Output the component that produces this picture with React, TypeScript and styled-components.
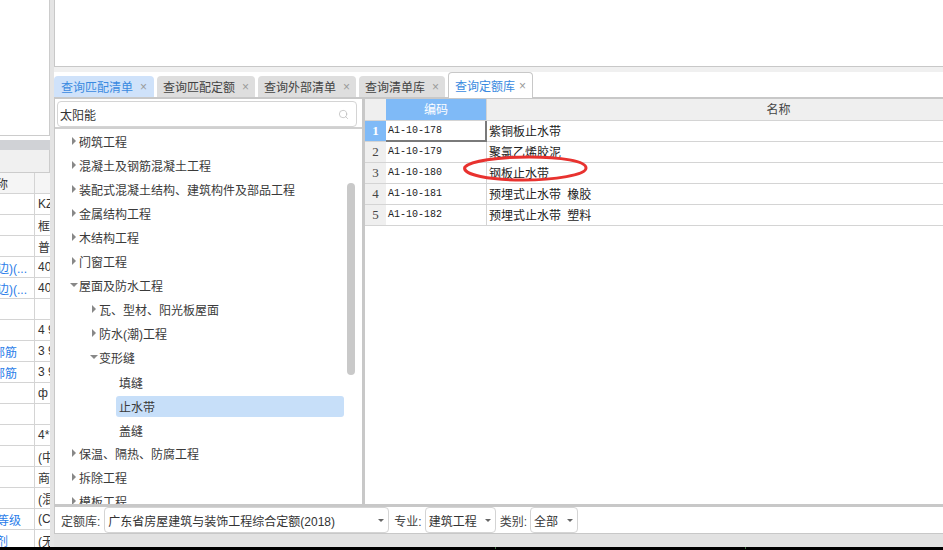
import React from "react";
import styled, { createGlobalStyle } from "styled-components";
import { Search } from "lucide-react";

const GlobalStyle = createGlobalStyle`
  html, body {
    margin: 0;
    padding: 0;
    height: 100%;
    overflow: hidden;
    background: #fff;
    font-family: "Liberation Sans", "Noto Sans CJK SC", sans-serif;
    font-size: 12px;
    color: #333;
  }
`;

const Page = styled.div`
  width: 943px;
  height: 550px;
  display: flex;
  flex-direction: column;
  overflow: hidden;
`;

const Body = styled.div`
  flex: 1;
  min-height: 0;
  display: flex;
`;

const Taskbar = styled.div`
  height: 3px;
  background: #000;
  position: relative;
`;

const TaskTick = styled.span<{ $x: number }>`
  position: absolute;
  left: ${(p) => p.$x}px;
  top: 0;
  width: 1px;
  height: 2px;
  background: #3c6b3c;
`;

/* left column, the table cut off by the splitter */
const LeftColumn = styled.div`
  width: 50px;
  flex: none;
  display: flex;
  flex-direction: column;
  overflow: hidden;
`;

const LeftBlank = styled.div`
  height: 135px;
  flex: none;
  border-right: 1px solid #ccc;
  border-bottom: 1px solid #ccc;
  box-sizing: content-box;
  width: 49px;
`;

const LeftGap = styled.div`
  height: 4px;
  flex: none;
`;

const LeftBar = styled.div`
  height: 10px;
  flex: none;
  background: #d0d2d6;
`;

const LeftToolbar = styled.div`
  height: 23px;
  flex: none;
  background: #f0f0f0;
  border-bottom: 1px solid #ccc;
  border-right: 1px solid #ccc;
  box-sizing: border-box;
`;

const Row = styled.div<{ $head?: boolean }>`
  height: 21px;
  flex: none;
  box-sizing: border-box;
  display: grid;
  grid-template-columns: 35px 15px;
  border-bottom: 1px solid #d4d4d4;
  background: ${(p) => (p.$head ? "#f5f5f5" : "#fff")};
`;

const NameCell = styled.div<{ $link?: boolean; $end?: number }>`
  display: flex;
  justify-content: flex-end;
  align-items: center;
  overflow: hidden;
  white-space: nowrap;
  padding-right: ${(p) => p.$end ?? 2}px;
  border-right: 1px solid #d4d4d4;
  color: ${(p) => (p.$link ? "#2b7de9" : "#333")};
`;

const ValueCell = styled.div`
  display: flex;
  align-items: center;
  overflow: hidden;
  white-space: pre;
  padding-left: 3px;
`;

const Gutter = styled.div`
  width: 4px;
  flex: none;
  background: #e4e4e4;
`;

/* main area */
const Main = styled.div`
  flex: 1;
  min-width: 0;
  display: flex;
  flex-direction: column;
`;

const TopPanel = styled.div`
  height: 67px;
  flex: none;
  box-sizing: border-box;
  background: #fff;
  border-left: 1px solid #c8c8c8;
  border-bottom: 1px solid #c8c8c8;
`;

const TopGap = styled.div`
  height: 5px;
  flex: none;
  background: #f0f0f0;
`;

const TabBar = styled.div`
  height: 25px;
  flex: none;
  display: flex;
  align-items: flex-end;
  gap: 3px;
  background: #fff;
`;

const Tab = styled.div<{ $width: number; $variant: "hover" | "idle" | "active" }>`
  width: ${(p) => p.$width}px;
  height: ${(p) => (p.$variant === "active" ? 26 : 21)}px;
  box-sizing: border-box;
  display: flex;
  align-items: center;
  padding-left: ${(p) => (p.$variant === "hover" ? 7 : 6)}px;
  gap: ${(p) => (p.$variant === "active" ? 4 : 7)}px;
  border-radius: 4px 4px 0 0;
  white-space: nowrap;
  color: ${(p) => (p.$variant === "idle" ? "#444" : "#3a8ae0")};
  background: ${(p) =>
    p.$variant === "hover" ? "#cfe2fa" : p.$variant === "idle" ? "#dedede" : "#fff"};
  ${(p) =>
    p.$variant === "active" &&
    `border: 1px solid #c8c8c8; border-bottom: none; position: relative; top: 1px; z-index: 1;`}
`;

const TabClose = styled.span`
  color: #9a9a9a;
  font-size: 12px;
  line-height: 1;
`;

const Content = styled.div`
  flex: 1;
  min-height: 0;
  display: flex;
  flex-direction: column;
  background: #fff;
  border-top: 2px solid #c8c8c8;
  border-left: 1px solid #c8c8c8;
`;

const Split = styled.div`
  flex: 1;
  min-height: 0;
  display: flex;
`;

const TreePanel = styled.div`
  width: 307px;
  flex: none;
  display: flex;
  flex-direction: column;
  border-right: 3px solid #c8c8c8;
  position: relative;
`;

const SearchWrap = styled.div`
  height: 30px;
  flex: none;
  box-sizing: border-box;
  padding: 2px 5px 2px 2px;
  border-bottom: 2px solid #d0d0d0;
`;

const SearchBox = styled.div`
  height: 26px;
  box-sizing: border-box;
  display: flex;
  align-items: center;
  justify-content: space-between;
  padding: 0 7px 0 2px;
  border: 1px solid #d4d4d4;
  border-radius: 4px;
  font-size: 12px;
  color: #333;
  svg {
    color: #b4b4b4;
  }
`;

const Tree = styled.div`
  flex: 1;
  min-height: 0;
  overflow: hidden;
  display: flex;
  flex-direction: column;
`;

const TreeRow = styled.div<{ $level: number }>`
  height: 24px;
  flex: none;
  display: flex;
  align-items: center;
  padding-left: ${(p) => 15 + p.$level * 20}px;
  white-space: nowrap;
  color: #3a3a3a;
`;

const Arrow = styled.span<{ $open?: boolean }>`
  width: 7px;
  margin-right: 2px;
  flex: none;
  display: flex;
  justify-content: center;
  &::before {
    content: "";
    width: 0;
    height: 0;
    ${(p) =>
      p.$open
        ? `border-left: 4px solid transparent; border-right: 4px solid transparent; border-top: 4px solid #888;`
        : `border-top: 4px solid transparent; border-bottom: 4px solid transparent; border-left: 4px solid #888;`}
  }
`;

const LeafRow = styled.div<{ $selected?: boolean }>`
  height: 21px;
  flex: none;
  margin: 3px 18px 0 61px;
  padding-left: 3px;
  display: flex;
  align-items: center;
  border-radius: 3px;
  color: #3a3a3a;
  background: ${(p) => (p.$selected ? "#c7dff9" : "transparent")};
`;

const ScrollThumb = styled.div`
  position: absolute;
  left: 292px;
  top: 84px;
  width: 8px;
  height: 192px;
  border-radius: 4px;
  background: #c9c9c9;
`;

/* result grid on the right, the name column runs past the window edge */
const GridPanel = styled.div`
  flex: 1;
  min-width: 0;
  position: relative;
  overflow: hidden;
`;

const GridRow = styled.div<{ $head?: boolean }>`
  display: grid;
  grid-template-columns: 21px 101px 584px;
  height: ${(p) => (p.$head ? 22 : 21)}px;
  box-sizing: border-box;
  border-bottom: 1px solid #d4d4d4;
  background: ${(p) => (p.$head ? "#efefef" : "#fff")};
`;

const RowHeader = styled.div<{ $active?: boolean }>`
  display: flex;
  align-items: center;
  justify-content: center;
  font-family: "Liberation Serif", serif;
  font-size: 13px;
  font-weight: ${(p) => (p.$active ? 700 : 400)};
  color: ${(p) => (p.$active ? "#fff" : "#444")};
  background: ${(p) => (p.$active ? "#7fbaf7" : "#efefef")};
`;

const HeadCell = styled.div<{ $active?: boolean }>`
  display: flex;
  align-items: center;
  justify-content: center;
  padding-bottom: 2px;
  color: ${(p) => (p.$active ? "#fff" : "#444")};
  background: ${(p) => (p.$active ? "#7fbaf7" : "transparent")};
  border-right: 1px solid #d4d4d4;
`;

const CodeCell = styled.div<{ $selected?: boolean }>`
  display: flex;
  align-items: center;
  padding: 0 0 2px 2px;
  font-family: "Liberation Mono", monospace;
  font-size: 10px;
  color: #222;
  border-right: 1px solid #d4d4d4;
  ${(p) =>
    p.$selected &&
    `box-shadow: inset -2px -2px 0 #7a7a7a; border-right: none; margin-bottom: -1px;`}
`;

const TextCell = styled.div`
  display: flex;
  align-items: center;
  padding: 0 0 2px 2px;
  white-space: pre;
  word-spacing: 3px;
  color: #222;
`;

const Annotation = styled.svg`
  position: absolute;
  left: 98px;
  top: 56px;
  pointer-events: none;
`;

/* footer filters */
const Footer = styled.div`
  height: 30px;
  flex: none;
  box-sizing: border-box;
  display: flex;
  align-items: center;
  padding-left: 6px;
  border-top: 3px solid #c8c8c8;
  border-bottom: 1px solid #c8c8c8;
  background: #fff;
`;

const FilterLabel = styled.span<{ $gap?: number }>`
  margin-left: ${(p) => p.$gap ?? 0}px;
  margin-right: ${(p) => (p.$gap ? 3 : 4)}px;
  color: #444;
  white-space: nowrap;
`;

const Select = styled.div<{ $width: number }>`
  width: ${(p) => p.$width}px;
  height: 26px;
  box-sizing: border-box;
  display: flex;
  align-items: center;
  justify-content: space-between;
  padding: 0 4px 0 3px;
  border: 1px solid #d4d4d4;
  border-radius: 4px;
  white-space: nowrap;
  color: #333;
  &::after {
    content: "";
    border-left: 3px solid transparent;
    border-right: 3px solid transparent;
    border-top: 3px solid #666;
  }
`;

const BottomStrip = styled.div`
  height: 13px;
  flex: none;
  background: #e2e2e2;
`;

const leftRows: { name?: string; value?: string; link?: boolean; end?: number }[] = [
  { value: "KZ1" },
  { value: "框架柱" },
  { value: "普通" },
  { name: "边)(...", value: "400", link: true, end: 7 },
  { name: "边)(...", value: "400", link: true, end: 7 },
  {},
  { value: "4 9" },
  { name: "部筋", value: "3 9", link: true, end: 17 },
  { name: "部筋", value: "3 9", link: true, end: 17 },
  { value: "ф" },
  {},
  { value: "4*" },
  { value: "(中" },
  { value: "商" },
  { value: "(混" },
  { name: "等级", value: "(C", link: true, end: 13 },
  { name: "剂", value: "(无", link: true, end: 26 },
];

const tabs: { label: string; width: number; variant: "hover" | "idle" | "active" }[] = [
  { label: "查询匹配清单", width: 100, variant: "hover" },
  { label: "查询匹配定额", width: 98, variant: "idle" },
  { label: "查询外部清单", width: 98, variant: "idle" },
  { label: "查询清单库", width: 86, variant: "idle" },
  { label: "查询定额库", width: 85, variant: "active" },
];

const results = [
  ["A1-10-178", "紫铜板止水带"],
  ["A1-10-179", "聚氯乙烯胶泥"],
  ["A1-10-180", "钢板止水带"],
  ["A1-10-181", "预埋式止水带 橡胶"],
  ["A1-10-182", "预埋式止水带 塑料"],
];

function Branch({ level, label, open }: { level: number; label: string; open?: boolean }) {
  return (
    <TreeRow $level={level}>
      <Arrow $open={open} />
      {label}
    </TreeRow>
  );
}

export default function App() {
  return (
    <Page>
      <GlobalStyle />
      <Body>
        <LeftColumn>
          <LeftBlank />
          <LeftGap />
          <LeftBar />
          <LeftToolbar />
          <Row $head>
            <NameCell $end={26}>称</NameCell>
            <ValueCell />
          </Row>
          {leftRows.map((r, i) => (
            <Row key={i}>
              <NameCell $link={r.link} $end={r.end}>
                {r.name}
              </NameCell>
              <ValueCell>{r.value}</ValueCell>
            </Row>
          ))}
        </LeftColumn>
        <Gutter />
        <Main>
          <TopPanel />
          <TopGap />
          <TabBar>
            {tabs.map((t) => (
              <Tab key={t.label} $width={t.width} $variant={t.variant}>
                {t.label}
                <TabClose>×</TabClose>
              </Tab>
            ))}
          </TabBar>
          <Content>
            <Split>
              <TreePanel>
                <SearchWrap>
                  <SearchBox>
                    太阳能
                    <Search size={11} strokeWidth={1.5} />
                  </SearchBox>
                </SearchWrap>
                <Tree>
                  <Branch level={0} label="砌筑工程" />
                  <Branch level={0} label="混凝土及钢筋混凝土工程" />
                  <Branch level={0} label="装配式混凝土结构、建筑构件及部品工程" />
                  <Branch level={0} label="金属结构工程" />
                  <Branch level={0} label="木结构工程" />
                  <Branch level={0} label="门窗工程" />
                  <Branch level={0} label="屋面及防水工程" open />
                  <Branch level={1} label="瓦、型材、阳光板屋面" />
                  <Branch level={1} label="防水(潮)工程" />
                  <Branch level={1} label="变形缝" open />
                  <LeafRow>填缝</LeafRow>
                  <LeafRow $selected>止水带</LeafRow>
                  <LeafRow>盖缝</LeafRow>
                  <Branch level={0} label="保温、隔热、防腐工程" />
                  <Branch level={0} label="拆除工程" />
                  <Branch level={0} label="模板工程" />
                </Tree>
                <ScrollThumb />
              </TreePanel>
              <GridPanel>
                <GridRow $head>
                  <RowHeader />
                  <HeadCell $active>编码</HeadCell>
                  <HeadCell>名称</HeadCell>
                </GridRow>
                {results.map(([code, name], i) => (
                  <GridRow key={code}>
                    <RowHeader $active={i === 0}>{i + 1}</RowHeader>
                    <CodeCell $selected={i === 0}>{code}</CodeCell>
                    <TextCell>{name}</TextCell>
                  </GridRow>
                ))}
                <Annotation width="126" height="28" viewBox="0 0 126 28">
                  <path
                    d="M2 12 C8 6 34 2 66 2 C98 2 123 6 123 13 C123 20 92 25 60 25 C28 25 -2 20 2 12 Z"
                    fill="none"
                    stroke="#e8322f"
                    strokeWidth="3"
                  />
                </Annotation>
              </GridPanel>
            </Split>
            <Footer>
              <FilterLabel>定额库:</FilterLabel>
              <Select $width={285}>广东省房屋建筑与装饰工程综合定额(2018)</Select>
              <FilterLabel $gap={5}>专业:</FilterLabel>
              <Select $width={71}>建筑工程</Select>
              <FilterLabel $gap={4}>类别:</FilterLabel>
              <Select $width={48}>全部</Select>
            </Footer>
          </Content>
          <BottomStrip />
        </Main>
      </Body>
      <Taskbar>
        <TaskTick $x={495} />
        <TaskTick $x={745} />
      </Taskbar>
    </Page>
  );
}
